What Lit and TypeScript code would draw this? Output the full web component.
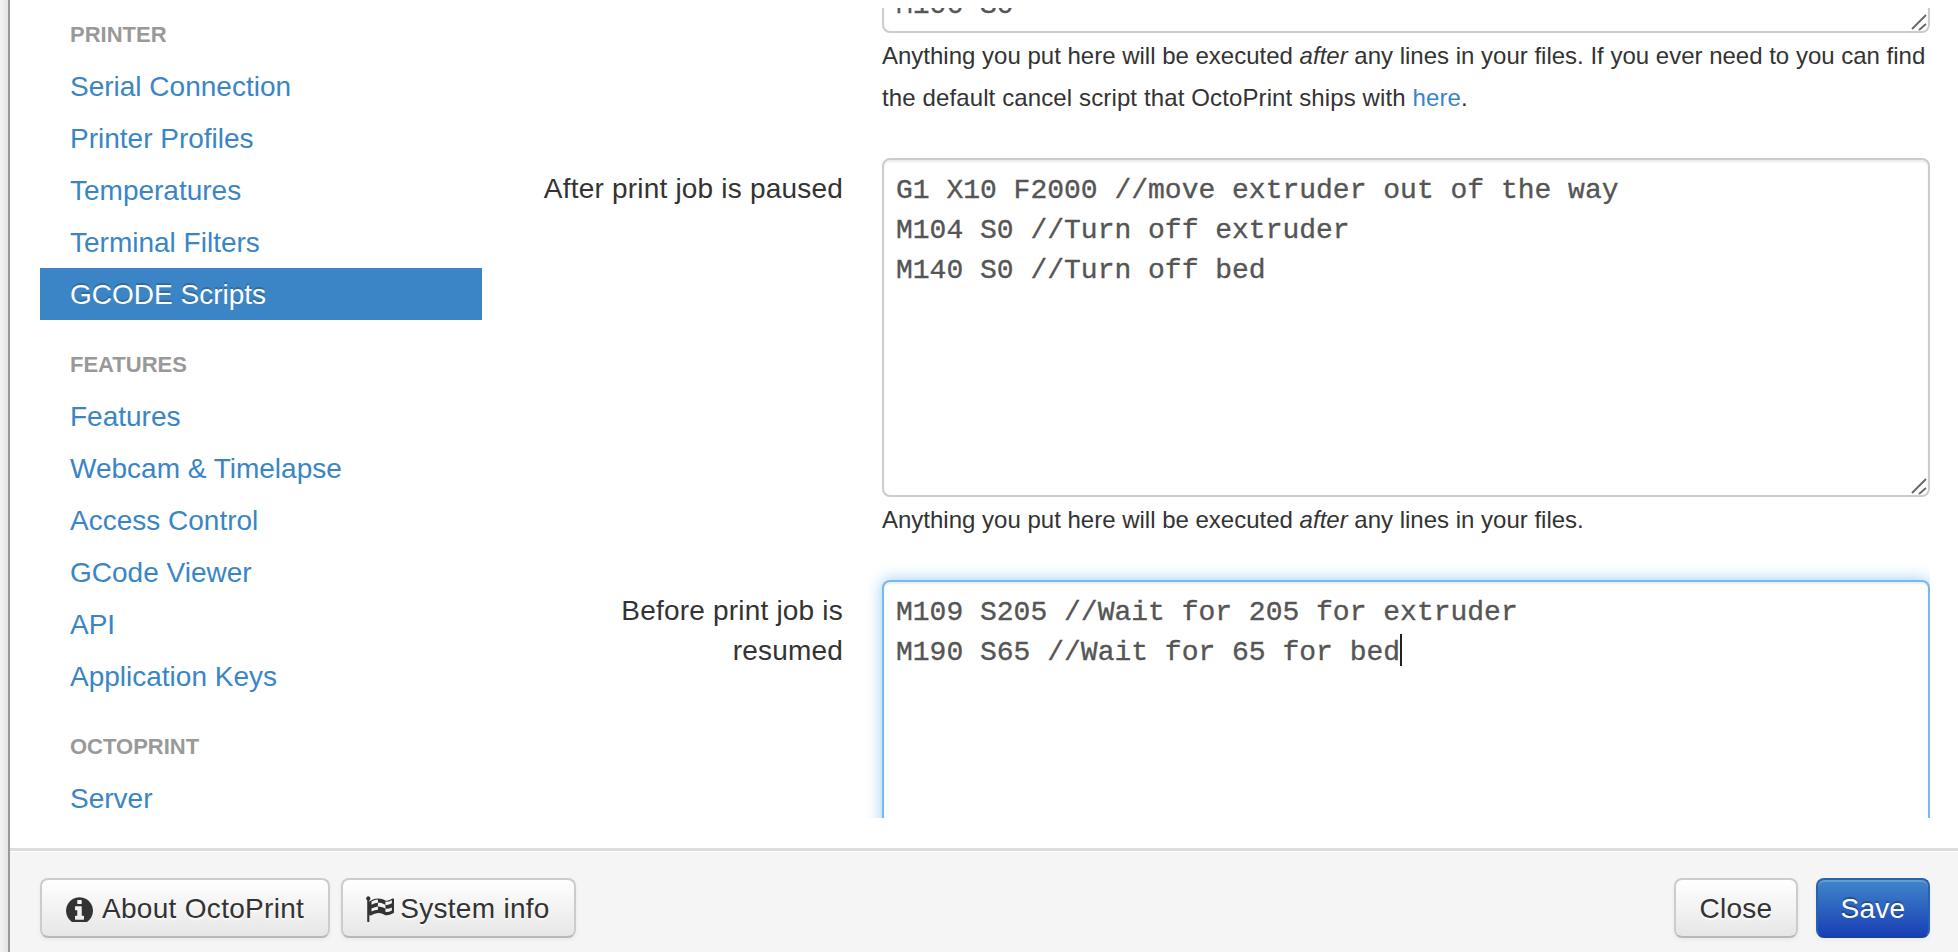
import { LitElement, html, css, svg } from "lit";
import { customElement } from "lit/decorators.js";

const NAV: { header: string; items: string[] }[] = [
  { header: "Printer", items: ["Serial Connection", "Printer Profiles", "Temperatures", "Terminal Filters", "GCODE Scripts"] },
  { header: "Features", items: ["Features", "Webcam & Timelapse", "Access Control", "GCode Viewer", "API", "Application Keys"] },
  { header: "OctoPrint", items: ["Server"] },
];

const INFO = svg`<path d="M1024 1376v-160q0-14-9-23t-23-9h-96v-512q0-14-9-23t-23-9h-320q-14 0-23 9t-9 23v160q0 14 9 23t23 9h96v320h-96q-14 0-23 9t-9 23v160q0 14 9 23t23 9h448q14 0 23-9t9-23zm-128-896v-160q0-14-9-23t-23-9h-192q-14 0-23 9t-9 23v160q0 14 9 23t23 9h192q14 0 23-9t9-23zm640 416q0 209-103 385.500t-279.500 279.500-385.500 103-385.500-103-279.500-279.500-103-385.500 103-385.500 279.500-279.500 385.500-103 385.500 103 279.500 279.500 103 385.500z"/>`;
const FLAG = svg`<path d="M832 1000v-192q-181 16-384 117v185q205-96 384-110zm0-418v-197q-172 8-384 126v189q215-111 384-118zm832 463v-184q-235 116-384 71v-224q-20-6-39-15-5-3-33-17t-34.500-17-31.500-15-34.500-15.500-32.500-13-36-12.500-35-8.500-39.500-7.500-39.500-4-44-2q-23 0-49 3v222h19q102 0 192.500 29t197.500 82q19 9 39 15v188q42 17 91 17 120 0 293-92zm0-427v-189q-169 91-306 91-45 0-78-8v196q148 42 384-90zm-1280-294q0 35-17.500 64t-46.500 46v1266q0 14-9 23t-23 9h-64q-14 0-23-9t-9-23v-1266q-29-17-46.500-46t-17.500-64q0-53 37.500-90.500t90.500-37.500 90.500 37.500 37.500 90.500zm1408 64v763q0 39-35 57-10 5-17 9-218 116-369 116-88 0-158-35l-28-14q-64-33-99-48t-91-29-114-14q-102 0-235.500 44t-228.500 102q-15 9-33 9-16 0-32-8-32-19-32-56v-742q0-35 31-55 35-21 78.500-42.500t114-52 152.500-49.500 155-19q112 0 209 31t209 86q38 19 89 19 122 0 310-112 22-12 31-17 31-16 62 2 31 20 31 55z"/>`;

@customElement("app-root")
export class AppRoot extends LitElement {
  static styles = css`
    :host {
      display: flex;
      height: 952px;
      overflow: hidden;
      background: #fff;
      color: #333;
      font-family: "Liberation Sans", Arial, sans-serif;
      font-size: 28px;
      line-height: 40px;
    }
    .gutter {
      width: 8px;
      flex: none;
      background: linear-gradient(to right, #f4f4f4, #e4e4e4);
      border-right: 2px solid #999;
    }
    .modal {
      flex: 1;
      min-width: 0;
      display: flex;
      flex-direction: column;
    }
    .body {
      flex: none;
      height: 848px;
      box-sizing: border-box;
      padding: 8px 28px 30px 30px;
      display: flex;
      background: #fff;
    }
    .side {
      width: 442px;
      flex: none;
    }
    .nav-header {
      padding: 7px 30px 5px;
      font-size: 22px;
      font-weight: 700;
      color: #999;
      text-transform: uppercase;
      text-shadow: 0 2px 0 rgba(255, 255, 255, 0.5);
    }
    .group + .group {
      margin-top: 18px;
    }
    .nav-item {
      display: block;
      padding: 7px 30px 5px;
      color: #3a85c6;
      text-decoration: none;
    }
    .nav-item.active {
      background: #3b85c6;
      color: #fff;
      text-shadow: 0 -2px 0 rgba(0, 0, 0, 0.2);
    }
    .content {
      flex: 1;
      min-width: 0;
      overflow: hidden;
      padding-left: 40px;
    }
    .scroll {
      margin-top: -75px;
    }
    .row {
      display: flex;
      gap: 39px;
      margin-bottom: 39px;
    }
    .label {
      width: 321px;
      flex: none;
      box-sizing: border-box;
      padding-top: 11px;
      text-align: right;
      letter-spacing: 0.2px;
    }
    .control {
      flex: 1;
      min-width: 0;
    }
    .code {
      position: relative;
      box-sizing: border-box;
      height: 339px;
      padding: 11px 12px 5px;
      border: 2px solid #ccc;
      border-radius: 8px;
      box-shadow: inset 0 2px 2px rgba(0, 0, 0, 0.075);
      font-family: "Liberation Mono", "Courier New", monospace;
      font-size: 28px;
      line-height: 40px;
      color: #555;
      -webkit-text-stroke: 0.35px #555;
      white-space: pre;
      background: #fff;
    }
    .code.tail {
      height: 100px;
      display: flex;
      align-items: flex-end;
      padding-bottom: 5px;
    }
    .code.focus {
      border-color: rgba(82, 168, 236, 0.8);
      box-shadow: inset 0 2px 2px rgba(0, 0, 0, 0.075), 0 0 16px rgba(82, 168, 236, 0.6);
    }
    .caret {
      display: inline-block;
      width: 2px;
      height: 32px;
      margin-right: -2px;
      vertical-align: -6px;
      background: #222;
    }
    .grip {
      position: absolute;
      right: 0;
      bottom: 0;
      width: 18px;
      height: 18px;
      stroke: #666;
      stroke-width: 1.8;
      fill: none;
    }
    .help {
      margin-top: 2px;
      font-size: 24px;
      line-height: 42px;
    }
    .help a {
      color: #3a85c6;
      text-decoration: none;
    }
    .loose {
      letter-spacing: 0.12px;
    }
    .footer {
      flex: 1;
      box-sizing: border-box;
      padding: 27px 28px 0 30px;
      display: flex;
      align-items: flex-start;
      gap: 11px;
      background: #f5f5f5;
      border-top: 3px solid #ddd;
      box-shadow: inset 0 1px 0 #fff;
    }
    .spacer {
      flex: 1;
    }
    .btn {
      box-sizing: border-box;
      height: 60px;
      padding: 2px 24px 0;
      display: inline-flex;
      align-items: center;
      gap: 9px;
      border: 2px solid #ccc;
      border-bottom-color: #b8b8b8;
      border-radius: 8px;
      background: linear-gradient(to bottom, #fff, #e6e6e6);
      box-shadow: inset 0 2px 0 rgba(255, 255, 255, 0.2), 0 2px 4px rgba(0, 0, 0, 0.05);
      color: #333;
      font: inherit;
      letter-spacing: 0.3px;
      text-shadow: 0 2px 2px rgba(255, 255, 255, 0.75);
    }
    .btn svg {
      fill: #333;
      flex: none;
      margin-top: -2px;
    }
    .btn svg.flag {
      margin-left: -3px;
      margin-right: -3px;
    }
    .btn.compact {
      padding: 2px 23.5px 0;
    }
    .btn.primary {
      margin-left: 7px;
      padding: 2px 22.5px 0;
      border-color: #2a62b0 #2a62b0 #1c3f9c;
      background: linear-gradient(to bottom, #3f86c8, #1a3fb6);
      color: #fff;
      text-shadow: 0 -2px 0 rgba(0, 0, 0, 0.25);
    }
  `;

  private grip() {
    return html`<svg class="grip" viewBox="0 0 18 18" aria-hidden="true">
      <path d="M2 16 16 2M9 17l7-6" />
    </svg>`;
  }

  render() {
    return html`
      <div class="gutter"></div>
      <div class="modal">
        <div class="body">
          <nav class="side">
            ${NAV.map(
              (g) => html`<div class="group">
                <div class="nav-header">${g.header}</div>
                ${g.items.map(
                  (i) => html`<a class="nav-item ${i === "GCODE Scripts" ? "active" : ""}">${i}</a>`
                )}
              </div>`
            )}
          </nav>
          <div class="content">
            <div class="scroll">
              <div class="row">
                <div class="label"></div>
                <div class="control">
                  <div class="code tail" role="textbox">M106 S0${this.grip()}</div>
                  <div class="help">
                    Anything you put here will be executed <em>after</em> any lines in your files. If you ever need to you can find <span class="loose">the default cancel script that OctoPrint ships with <a>here</a>.</span>
                  </div>
                </div>
              </div>
              <div class="row">
                <div class="label">After print job is paused</div>
                <div class="control">
                  <div class="code" role="textbox">G1 X10 F2000 //move extruder out of the way
M104 S0 //Turn off extruder
M140 S0 //Turn off bed${this.grip()}</div>
                  <div class="help">Anything you put here will be executed <em>after</em> any lines in your files.</div>
                </div>
              </div>
              <div class="row">
                <div class="label">Before print job is resumed</div>
                <div class="control">
                  <div class="code focus" role="textbox">M109 S205 //Wait for 205 for extruder
M190 S65 //Wait for 65 for bed<span class="caret"></span></div>
                </div>
              </div>
            </div>
          </div>
        </div>
        <div class="footer">
          <button class="btn">
            <svg width="27" height="27" viewBox="0 0 1536 1536">${INFO}</svg>About OctoPrint
          </button>
          <button class="btn">
            <svg class="flag" width="30" height="30" viewBox="0 0 1792 1792">${FLAG}</svg>System info
          </button>
          <div class="spacer"></div>
          <button class="btn compact">Close</button>
          <button class="btn primary">Save</button>
        </div>
      </div>
    `;
  }
}
